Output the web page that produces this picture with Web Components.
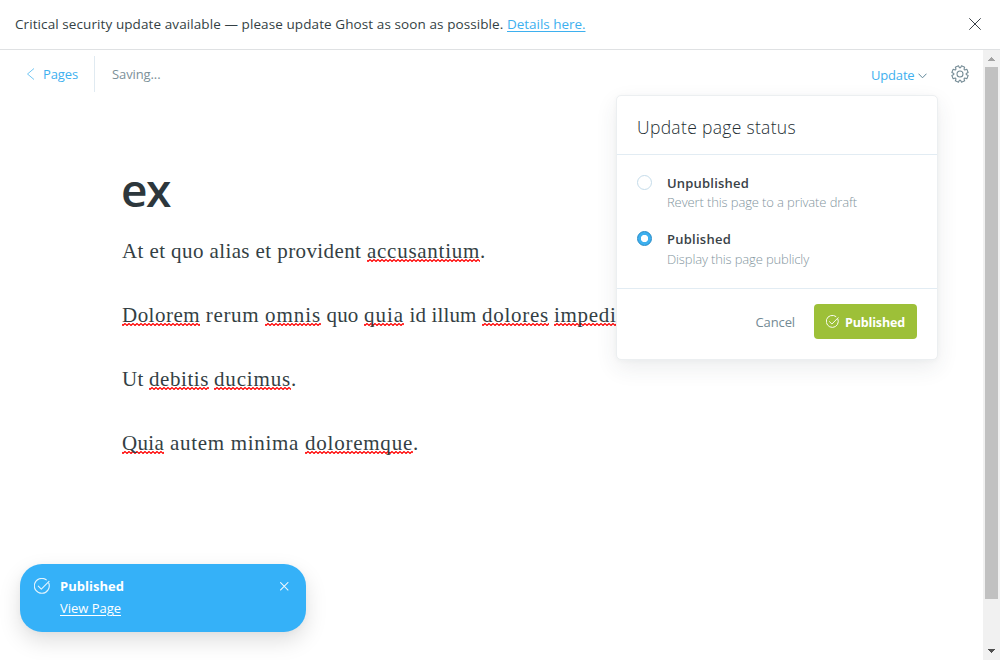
<!DOCTYPE html>
<html lang="en">
<head>
<meta charset="utf-8">
<title>Editor</title>
<style>
html,body{margin:0;height:100%;overflow:hidden;background:#fff}
body{font-family:"Open Sans","Noto Sans",sans-serif;font-size:13px;color:#343f44}
</style>
</head>
<body>
<ghost-app></ghost-app>
<script>
function define(name, html, setup) {
  const t = document.createElement('template');
  t.innerHTML = html;
  customElements.define(name, class extends HTMLElement {
    connectedCallback() {
      if (this.shadowRoot) return;
      this.attachShadow({mode: 'open'}).append(t.content.cloneNode(true));
      if (setup) setup(this, this.shadowRoot);
    }
  });
}

/* Text run that spreads its letters over the width given in the "w" attribute. */
define('text-run', `<style>
:host{display:inline-block;white-space:pre;flex:none}
:host([wavy]){background:url("data:image/svg+xml,%3Csvg xmlns='http://www.w3.org/2000/svg' width='4' height='3'%3E%3Cpath d='M-1 .5L1 2.5L3 .5L5 2.5' fill='none' stroke='%23f00' stroke-width='1.2'/%3E%3C/svg%3E") repeat-x 0 24px}
:host([line]) span{text-decoration:underline;text-underline-offset:2px;text-decoration-thickness:1px}
span{display:inline-block}
</style><span></span>`, (host, root) => {
  const s = root.querySelector('span');
  s.textContent = host.textContent;
  const w = parseFloat(host.getAttribute('w'));
  const natural = s.getBoundingClientRect().width;
  s.style.letterSpacing = ((w - natural) / s.textContent.length) + 'px';
  host.style.width = w + 'px';
});

define('check-icon', `<style>:host{display:block;flex:none;width:16px;height:16px}svg{display:block;width:100%;height:100%}</style>
<svg viewBox="0 0 16 16" fill="none" stroke="currentColor" stroke-width="1.15" stroke-linecap="round" stroke-linejoin="round"><path d="M14.7 5A7.45 7.45 0 1 1 12.2 1.8"/><path d="M4.3 8.2L7.3 11.1L15 3.3"/></svg>`);

define('cross-icon', `<style>:host{display:block;flex:none;width:12px;height:12px}svg{display:block;width:100%;height:100%}</style>
<svg viewBox="0 0 12 12" fill="none" stroke="currentColor" stroke-width="var(--cross)"><path d="M.3.3L11.7 11.7M11.7.3L.3 11.7"/></svg>`);

define('gear-icon', `<style>:host{display:block;width:18px;height:18px;color:#738a94}svg{display:block}</style>
<svg width="18" height="18" viewBox="0 0 18 18" fill="none" stroke="currentColor" stroke-width="1.05" stroke-linejoin="round"><circle cx="9" cy="9" r="3"/><path/></svg>`, (host, root) => {
  const pts = [];
  for (let i = 0; i < 8; i++) {
    for (const [r, o] of [[6.2, -.3], [8.3, -.21], [8.3, .21], [6.2, .3]]) {
      const a = (i + .5) * Math.PI / 4 + o;
      pts.push((9 + r * Math.cos(a)).toFixed(2) + ' ' + (9 + r * Math.sin(a)).toFixed(2));
    }
  }
  root.querySelector('path').setAttribute('d', 'M' + pts.join('L') + 'Z');
});

define('security-banner', `<style>
:host{display:flex;box-sizing:border-box;height:50px;border-bottom:1px solid #dfe1e3;padding:0 19px 2px 15px;align-items:center;justify-content:space-between;font-size:13.5px;line-height:20px}
p{margin:0;display:flex}.link{color:#3eb0ef}
cross-icon{--cross:1;color:#394047}
</style><p><text-run w="492">Critical security update available — please update Ghost as soon as possible. </text-run><text-run class="link" w="78.5" line>Details here.</text-run></p><cross-icon></cross-icon>`);

define('editor-toolbar', `<style>
:host{display:flex;height:36px;padding:6px 14px 0 26px;align-items:center;font-size:13px;line-height:20px}
.back{display:flex;align-items:center;color:#3eb0ef;box-sizing:border-box;width:69px;height:36px;border-right:1px solid #e0eaf1}
.back svg{margin-right:8px}
.state{margin-left:17px;color:#7c9099}
.menu{margin-left:auto;display:flex;align-items:center;color:#3eb0ef;padding-top:2px}
.menu svg{margin:1px 0 0 3px}
gear-icon{margin-left:24.5px}
</style>
<div class="back"><svg width="9" height="12" viewBox="0 0 9 12" fill="none" stroke="#72c6f3"><path d="M8 .5L1.5 6L8 11.5"/></svg><text-run w="35">Pages</text-run></div>
<text-run class="state" w="48.5">Saving...</text-run>
<div class="menu"><text-run w="43.5">Update</text-run><svg width="9" height="6" viewBox="0 0 9 6" fill="none" stroke="#60879a"><path d="M.5 .7L4.5 4.8L8.5 .7"/></svg></div>
<gear-icon></gear-icon>`);

define('post-editor', `<style>
:host{display:block;padding:72px 0 0 122px;font:21px/32px "Liberation Serif",serif;color:#343f44}
h1{margin:0 0 21px -1px;font:600 46px/50px "Open Sans",sans-serif;color:#2d373c;height:50px}
p{margin:0 0 32px;display:flex;height:32px}
</style>
<h1><text-run w="49">ex</text-run></h1>
<p><text-run w="245">At et quo alias et provident </text-run><text-run w="113" wavy>accusantium</text-run><text-run w="5">.</text-run></p>
<p><text-run w="78" wavy>Dolorem</text-run><text-run w="65"> rerum </text-run><text-run w="56" wavy>omnis</text-run><text-run w="43"> quo </text-run><text-run w="40" wavy>quia</text-run><text-run w="78"> id illum </text-run><text-run w="67" wavy>dolores</text-run><text-run w="5"> </text-run><text-run w="69" wavy>impedit</text-run></p>
<p><text-run w="27">Ut </text-run><text-run w="60" wavy>debitis</text-run><text-run w="5"> </text-run><text-run w="77" wavy>ducimus</text-run><text-run w="5">.</text-run></p>
<p><text-run w="42" wavy>Quia</text-run><text-run w="141"> autem minima </text-run><text-run w="108" wavy>doloremque</text-run><text-run w="5">.</text-run></p>`);

define('scroll-bar', `<style>
:host{display:flex;flex-direction:column;width:17px;background:#f1f1f1;align-items:center;justify-content:space-between}
.thumb{width:13px;height:532px;background:#c1c1c1;margin-bottom:auto}
svg{display:block;flex:none}
</style><svg width="17" height="17" shape-rendering="crispEdges"><path fill="#a3a3a3" d="M8 7h1v1h1v1h1v1h1v1H5v-1h1V9h1V8h1z"/></svg><div class="thumb"></div>
<svg width="17" height="17" shape-rendering="crispEdges"><path fill="#505050" d="M5 6h7v1h-1v1h-1v1H9v1H8V9H7V8H6V7H5z"/></svg>`);

define('radio-option', `<style>
:host{display:flex;height:56px}
i{box-sizing:border-box;width:15px;height:15px;border:1px solid #c5dcea;border-radius:50%;margin:0 15px 0 0;background:#fff;flex:none}
:host([checked]) i{border:1px solid #2389c6;background:radial-gradient(circle,#fff 3.3px,#3eb0ef 4px)}
div{display:flex;flex-direction:column;margin-top:-1px}
::slotted(*){line-height:19px;height:19px}
::slotted([slot=label]){font-weight:600;color:#394247;font-size:13px}
::slotted([slot=hint]){color:#83959e;font-size:13px;font-weight:300}
:host([checked]) ::slotted([slot=hint]){margin-top:1px}
</style><i></i><div><slot name="label"></slot><slot name="hint"></slot></div>`);

define('status-menu', `<style>
:host{display:block;box-sizing:border-box;width:322px;height:265px;background:#fff;border:1px solid #eceff1;border-radius:5px;box-shadow:0 8px 22px rgba(39,56,68,.09),0 1px 5px rgba(39,56,68,.03)}
header{box-sizing:border-box;height:59px;padding:19px 20px 0;border-bottom:1px solid #e2ecf3;font-size:17.5px;line-height:24px;font-weight:300;color:#242e33}
section{box-sizing:border-box;height:134px;padding:20px 20px 0;border-bottom:1px solid #e2ecf3}
footer{display:flex;justify-content:flex-end;align-items:center;gap:19px;padding:15px 20px;height:35px;color:#738a94;line-height:20px}
button{all:unset;box-sizing:border-box;display:flex;align-items:center;width:103px;height:35px;padding-left:12px;border-radius:4px;background:#9dc038;color:#fff;font-weight:700;font-size:12.5px}
check-icon{width:13px;height:13px;margin-right:6px}
button text-run{position:relative;top:1px}
</style><header><text-run w="159">Update page status</text-run></header>
<section><radio-option><text-run slot="label" w="82">Unpublished</text-run><text-run slot="hint" w="190">Revert this page to a private draft</text-run></radio-option>
<radio-option checked><text-run slot="label" w="64">Published</text-run><text-run slot="hint" w="142">Display this page publicly</text-run></radio-option></section>
<footer><text-run class="c" w="39.5">Cancel</text-run><button><check-icon></check-icon><text-run w="60">Published</text-run></button></footer>`);

define('toast-message', `<style>
:host{display:flex;box-sizing:border-box;width:286px;height:68px;padding:14px 17.5px 0 14px;background:#35b1f8;border-radius:22px;color:#fff;box-shadow:0 9px 22px rgba(0,0,0,.13),0 1px 7px rgba(0,0,0,.03);line-height:20px;font-size:13px}
check-icon{width:16px;height:16px;margin-right:10px;opacity:.85}
.t{display:flex;flex-direction:column;gap:2px;flex:1;margin-top:-2px}
b{font-weight:700}
cross-icon{width:8.5px;height:8.5px;--cross:1.5;margin-top:4px;opacity:.9}
</style><check-icon></check-icon><div class="t"><b><text-run w="64">Published</text-run></b><text-run w="61" line>View Page</text-run></div><cross-icon></cross-icon>`);

define('ghost-app', `<style>
:host{display:flex;flex-direction:column;height:660px;width:1000px;position:relative;overflow:hidden}
main{flex:1;display:flex;min-height:0}
.page{flex:1;min-width:0;overflow:hidden}
status-menu{position:absolute;left:616px;top:95px}
toast-message{position:absolute;left:20px;top:564px}
</style><security-banner></security-banner>
<main><div class="page"><editor-toolbar></editor-toolbar><post-editor></post-editor></div><scroll-bar></scroll-bar></main>
<status-menu></status-menu><toast-message></toast-message>`);
</script>
</body>
</html>
